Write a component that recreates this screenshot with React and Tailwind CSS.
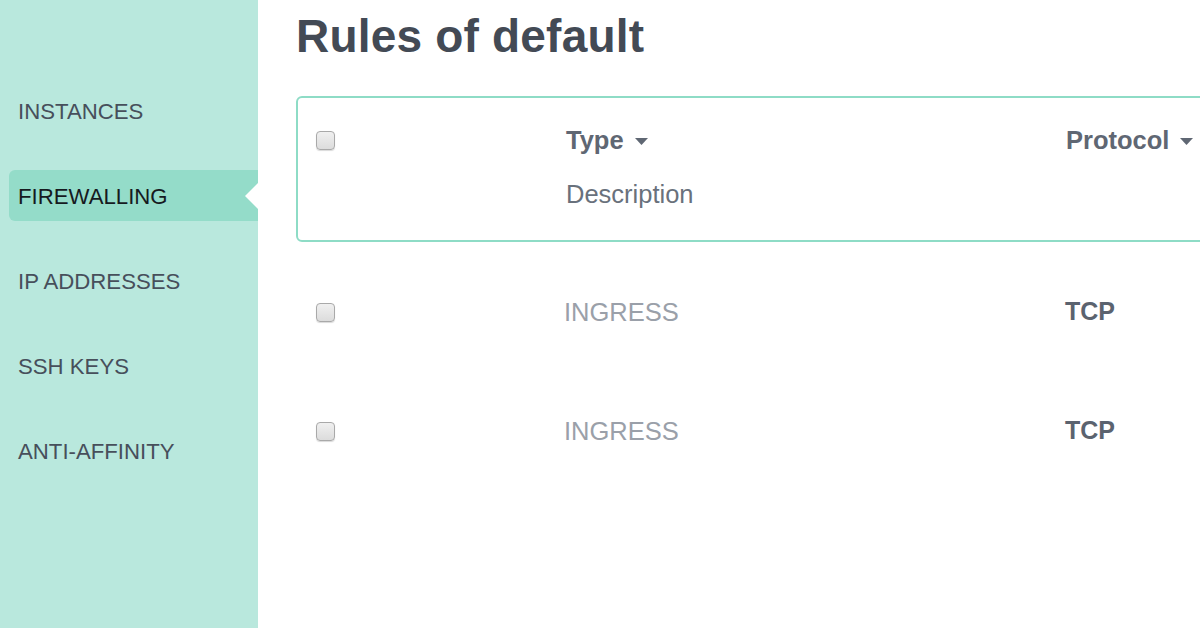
import React from 'react';

const navItems = ['INSTANCES', 'FIREWALLING', 'IP ADDRESSES', 'SSH KEYS', 'ANTI-AFFINITY'];

const rules = [
  { type: 'INGRESS', protocol: 'TCP' },
  { type: 'INGRESS', protocol: 'TCP' },
];

const Checkbox = () => (
  <span className="block w-[19px] h-[19px] rounded-[4px] border border-[#a9a9a9] bg-gradient-to-b from-[#f0f0f0] to-[#dcdcdc] shadow-[0_1px_1px_rgba(0,0,0,0.15)]" />
);

const Caret = () => (
  <svg width="13" height="7" viewBox="0 0 13 7" className="ml-[11px] mt-[2px]">
    <path d="M0 0 L13 0 L6.5 7 Z" fill="#5f6773" />
  </svg>
);

const App = () => {
  const active = 'FIREWALLING';

  return (
    <div className="flex w-[1200px] h-[628px] overflow-hidden bg-white font-['Liberation_Sans',Arial,sans-serif]">
      {/* Sidebar */}
      <aside className="w-[258px] shrink-0 bg-[#b9e8dd] pt-[85px]">
        <nav className="flex flex-col gap-[34px]">
          {navItems.map((item) => (
            <div
              key={item}
              className={
                'relative ml-[9px] pl-[9px] h-[51px] pt-[2px] flex items-center text-[22.2px] rounded-l-[6px] ' +
                (item === active ? 'bg-[#94dcc9] text-[#161a1f]' : 'text-[#474f5b]')
              }
            >
              {item}
              {item === active && (
                <span className="absolute right-0 top-1/2 -translate-y-1/2 w-0 h-0 border-y-[13px] border-y-transparent border-r-[13px] border-r-white" />
              )}
            </div>
          ))}
        </nav>
      </aside>

      {/* Main */}
      <main className="flex-1 pl-[38px]">
        <h1 className="mt-[12px] text-[46px] leading-[48px] font-bold text-[#434a55] tracking-[0.2px]">Rules of default</h1>

        <div className="mt-[36px] w-[1000px] h-[146px] border-2 border-[#8edcc6] rounded-[6px] pl-[18px] pt-[22px]">
          <div className="flex items-center h-[40px]">
            <div className="w-[250px]"><Checkbox /></div>
            <div className="w-[500px] flex items-center text-[25.5px] font-bold text-[#5f6773]">
              Type <Caret />
            </div>
            <div className="flex items-center text-[25.5px] font-bold text-[#5f6773]">
              Protocol <Caret />
            </div>
          </div>
          <div className="flex items-center h-[40px] mt-[14px]">
            <div className="w-[250px]" />
            <div className="text-[25.5px] text-[#69717c]">Description</div>
          </div>
        </div>

        <div className="flex flex-col mt-[50px] gap-[79px] pl-[20px]">
          {rules.map((r, i) => (
            <div key={i} className="flex items-center h-[40px]">
              <div className="w-[248px]"><Checkbox /></div>
              <div className="w-[501px] text-[25.5px] text-[#9aa0a9]">{r.type}</div>
              <div className="text-[25px] font-bold text-[#5b636f]">{r.protocol}</div>
            </div>
          ))}
        </div>
      </main>
    </div>
  );
};

export default App;
